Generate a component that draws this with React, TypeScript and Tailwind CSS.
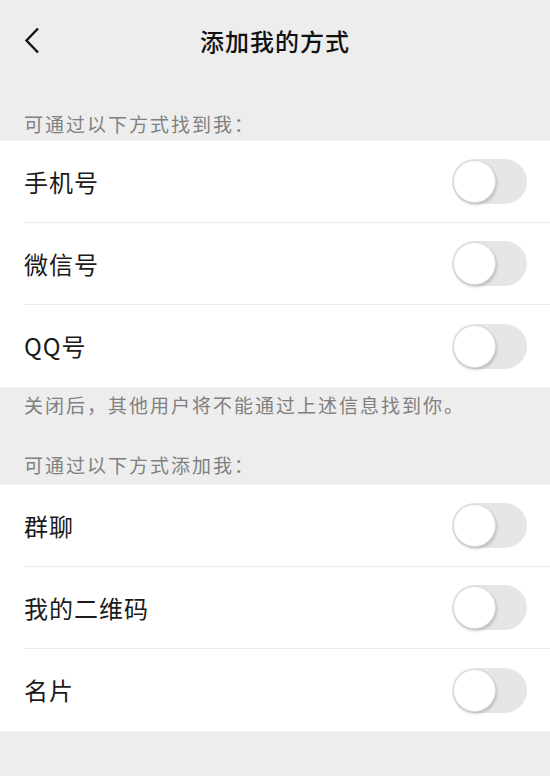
import React from 'react';

const font = { fontFamily: '"Noto Sans CJK SC", "Noto Sans", sans-serif' };

const Toggle: React.FC = () => (
  <div className="w-[75px] h-[45px] rounded-full bg-[#e6e6e6] p-px flex items-center">
    <div className="w-[43px] h-[43px] rounded-full bg-white border border-[#d9d9d9] shadow-[1px_2px_3px_rgba(0,0,0,0.18)]" />
  </div>
);

const Row: React.FC<{ label: string; last?: boolean }> = ({ label, last }) => (
  <div className="pl-6">
    <div className={`h-[82px] flex items-center justify-between pr-[23px] ${last ? '' : 'border-b border-[#ececec]'}`}>
      <span className="text-[24px] tracking-[1px] text-[#1a1a1a]">{label}</span>
      <Toggle />
    </div>
  </div>
);

const App: React.FC = () => {
  return (
    <div className="w-[550px] h-[776px] bg-[#ededed] overflow-hidden" style={font}>
      {/* Header */}
      <div className="h-[82px] relative flex items-center justify-center">
        <svg className="absolute left-[24px] top-[27px]" width="16" height="27" viewBox="0 0 16 27">
          <path d="M14 1.5 L2.5 13.5 L14 25.5" fill="none" stroke="#111" strokeWidth="2.4" />
        </svg>
        <h1 className="text-[24px] tracking-[1px] font-medium text-[#111]">添加我的方式</h1>
      </div>

      <div className="h-[59px] flex items-end pb-[5px] px-6">
        <span className="text-[19px] tracking-[2px] leading-[24px] text-[#808080]">可通过以下方式找到我：</span>
      </div>

      <div className="bg-white">
        <Row label="手机号" />
        <Row label="微信号" />
        <Row label="QQ号" last />
      </div>

      <div className="px-6 pt-[6px] pb-[8px]">
        <p className="text-[19px] tracking-[2px] leading-[24px] text-[#808080]">关闭后，其他用户将不能通过上述信息找到你。</p>
        <p className="text-[19px] tracking-[2px] leading-[24px] text-[#808080] mt-[36px]">可通过以下方式添加我：</p>
      </div>

      <div className="bg-white">
        <Row label="群聊" />
        <Row label="我的二维码" />
        <Row label="名片" last />
      </div>
    </div>
  );
};

export default App;
